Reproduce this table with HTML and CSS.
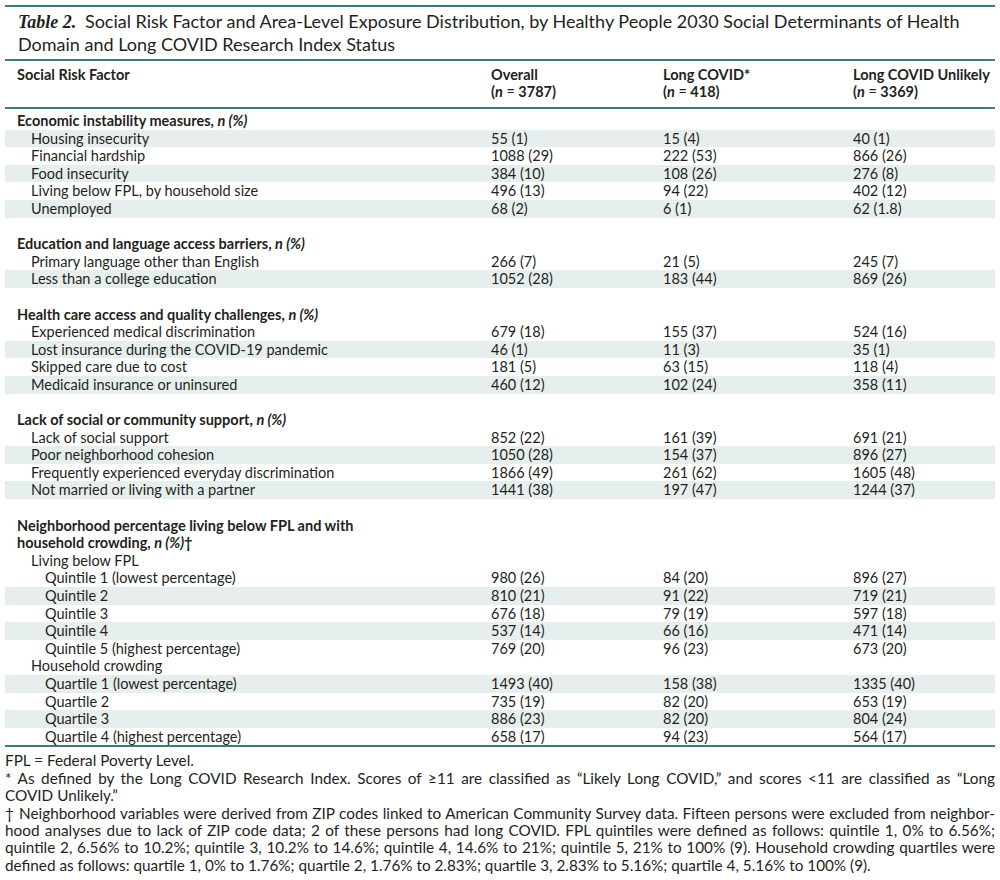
FILE: index.html
```html
<!DOCTYPE html>
<html>
<head>
<meta charset="utf-8">
<link rel="stylesheet" href="styles.css">
</head>
<body>
<div class="page">
  <div class="title"><span class="tlabel">Table 2.</span> Social Risk Factor and Area-Level Exposure Distribution, by Healthy People 2030 Social Determinants of Health Domain and Long COVID Research Index Status</div>
  <table class="tbl">
    <colgroup>
      <col class="c1"><col class="c2"><col class="c3"><col class="c4">
    </colgroup>
    <thead>
      <tr>
        <th>Social Risk Factor</th>
        <th>Overall<br>(<i>n</i> <span class="eq">=</span> 3787)</th>
        <th>Long COVID*<br>(<i>n</i> <span class="eq">=</span> 418)</th>
        <th>Long COVID Unlikely<br>(<i>n</i> <span class="eq">=</span> 3369)</th>
      </tr>
    </thead>
    <tbody>
      <tr class="grp first"><td colspan="4">Economic instability measures, <i>n (%)</i></td></tr>
      <tr class="s"><td class="l1">Housing insecurity</td><td>55 (1)</td><td>15 (4)</td><td>40 (1)</td></tr>
      <tr><td class="l1">Financial hardship</td><td>1088 (29)</td><td>222 (53)</td><td>866 (26)</td></tr>
      <tr class="s"><td class="l1">Food insecurity</td><td>384 (10)</td><td>108 (26)</td><td>276 (8)</td></tr>
      <tr><td class="l1">Living below FPL, by household size</td><td>496 (13)</td><td>94 (22)</td><td>402 (12)</td></tr>
      <tr class="s"><td class="l1">Unemployed</td><td>68 (2)</td><td>6 (1)</td><td>62 (1.8)</td></tr>
      <tr class="blank"><td colspan="4">&nbsp;</td></tr>

      <tr class="grp"><td colspan="4">Education and language access barriers, <i>n (%)</i></td></tr>
      <tr><td class="l1">Primary language other than English</td><td>266 (7)</td><td>21 (5)</td><td>245 (7)</td></tr>
      <tr class="s"><td class="l1">Less than a college education</td><td>1052 (28)</td><td>183 (44)</td><td>869 (26)</td></tr>
      <tr class="blank"><td colspan="4">&nbsp;</td></tr>

      <tr class="grp"><td colspan="4">Health care access and quality challenges, <i>n (%)</i></td></tr>
      <tr><td class="l1">Experienced medical discrimination</td><td>679 (18)</td><td>155 (37)</td><td>524 (16)</td></tr>
      <tr class="s"><td class="l1">Lost insurance during the COVID-19 pandemic</td><td>46 (1)</td><td>11 (3)</td><td>35 (1)</td></tr>
      <tr><td class="l1">Skipped care due to cost</td><td>181 (5)</td><td>63 (15)</td><td>118 (4)</td></tr>
      <tr class="s"><td class="l1">Medicaid insurance or uninsured</td><td>460 (12)</td><td>102 (24)</td><td>358 (11)</td></tr>
      <tr class="blank"><td colspan="4">&nbsp;</td></tr>

      <tr class="grp"><td colspan="4">Lack of social or community support, <i>n (%)</i></td></tr>
      <tr><td class="l1">Lack of social support</td><td>852 (22)</td><td>161 (39)</td><td>691 (21)</td></tr>
      <tr class="s"><td class="l1">Poor neighborhood cohesion</td><td>1050 (28)</td><td>154 (37)</td><td>896 (27)</td></tr>
      <tr><td class="l1">Frequently experienced everyday discrimination</td><td>1866 (49)</td><td>261 (62)</td><td>1605 (48)</td></tr>
      <tr class="s"><td class="l1">Not married or living with a partner</td><td>1441 (38)</td><td>197 (47)</td><td>1244 (37)</td></tr>
      <tr class="blank"><td colspan="4">&nbsp;</td></tr>

      <tr class="grp"><td colspan="4">Neighborhood percentage living below FPL and with<br>household crowding, <i>n (%)</i>†</td></tr>
      <tr><td class="l1" colspan="4">Living below FPL</td></tr>
      <tr><td class="l2">Quintile 1 (lowest percentage)</td><td>980 (26)</td><td>84 (20)</td><td>896 (27)</td></tr>
      <tr class="s"><td class="l2">Quintile 2</td><td>810 (21)</td><td>91 (22)</td><td>719 (21)</td></tr>
      <tr><td class="l2">Quintile 3</td><td>676 (18)</td><td>79 (19)</td><td>597 (18)</td></tr>
      <tr class="s"><td class="l2">Quintile 4</td><td>537 (14)</td><td>66 (16)</td><td>471 (14)</td></tr>
      <tr><td class="l2">Quintile 5 (highest percentage)</td><td>769 (20)</td><td>96 (23)</td><td>673 (20)</td></tr>
      <tr><td class="l1" colspan="4">Household crowding</td></tr>
      <tr class="s"><td class="l2">Quartile 1 (lowest percentage)</td><td>1493 (40)</td><td>158 (38)</td><td>1335 (40)</td></tr>
      <tr><td class="l2">Quartile 2</td><td>735 (19)</td><td>82 (20)</td><td>653 (19)</td></tr>
      <tr class="s"><td class="l2">Quartile 3</td><td>886 (23)</td><td>82 (20)</td><td>804 (24)</td></tr>
      <tr><td class="l2">Quartile 4 (highest percentage)</td><td>658 (17)</td><td>94 (23)</td><td>564 (17)</td></tr>
    </tbody>
  </table>
  <div class="notes">
    <p class="ln end">FPL <span class="eq">=</span> Federal Poverty Level.</p>
    <p class="ln">* As defined by the Long COVID Research Index. Scores of ≥11 are classified as “Likely Long COVID,” and scores &lt;11 are classified as “Long</p>
    <p class="ln end">COVID Unlikely.”</p>
    <p class="ln">† Neighborhood variables were derived from ZIP codes linked to American Community Survey data. Fifteen persons were excluded from neighbor-</p>
    <p class="ln">hood analyses due to lack of ZIP code data; 2 of these persons had long COVID. FPL quintiles were defined as follows: quintile 1, 0% to 6.56%;</p>
    <p class="ln">quintile 2, 6.56% to 10.2%; quintile 3, 10.2% to 14.6%; quintile 4, 14.6% to 21%; quintile 5, 21% to 100% (9). Household crowding quartiles were</p>
    <p class="ln end">defined as follows: quartile 1, 0% to 1.76%; quartile 2, 1.76% to 2.83%; quartile 3, 2.83% to 5.16%; quartile 4, 5.16% to 100% (9).</p>
  </div>
</div>
</body>
</html>
```

FILE: styles.css
```css
html, body {
  margin: 0;
  padding: 0;
  background: #ffffff;
}
body {
  font-family: Lato, "Open Sans", sans-serif;
  color: #231f20;
}
.page {
  padding: 5px 5px 0 5px;
}
.title {
  border-top: 2px solid #3e7c79;
  border-bottom: 2px solid #3e7c79;
  padding: 3px 12px 4px 13px;
  font-size: 18px;
  line-height: 22px;
}
.tlabel {
  font-family: "Liberation Serif", serif;
  font-style: italic;
  font-weight: bold;
  font-size: 18px;
  margin-right: 4px;
}
.tbl {
  width: 990px;
  border-collapse: collapse;
  table-layout: fixed;
  font-size: 14.5px;
}
.c1 { width: 474px; }
.c2 { width: 172px; }
.c3 { width: 190px; }
.c4 { width: 154px; }
.tbl th {
  text-align: left;
  vertical-align: top;
  font-weight: bold;
  line-height: 17px;
  padding: 5px 0 7px 12px;
  border-bottom: 2px solid #3e7c79;
  white-space: nowrap;
}
.tbl td {
  padding: 0 0 0 12px;
  line-height: 17.6px;
  white-space: nowrap;
}
.tbl tbody {
  border-bottom: 2px solid #3e7c79;
}
.eq {
  font-weight: normal;
}
.grp td {
  font-weight: bold;
}
.grp.first td {
  padding-top: 3px;
}
.tbl td.l1 { padding-left: 26px; }
.tbl td.l2 { padding-left: 40px; }
.s td {
  background: #e7efee;
}
.notes {
  padding-top: 5px;
  font-size: 15.3px;
  line-height: 17.4px;
}
.notes .ln {
  margin: 0;
  white-space: nowrap;
  text-align: justify;
  text-align-last: justify;
}
.notes .ln.end {
  text-align-last: left;
}
```
